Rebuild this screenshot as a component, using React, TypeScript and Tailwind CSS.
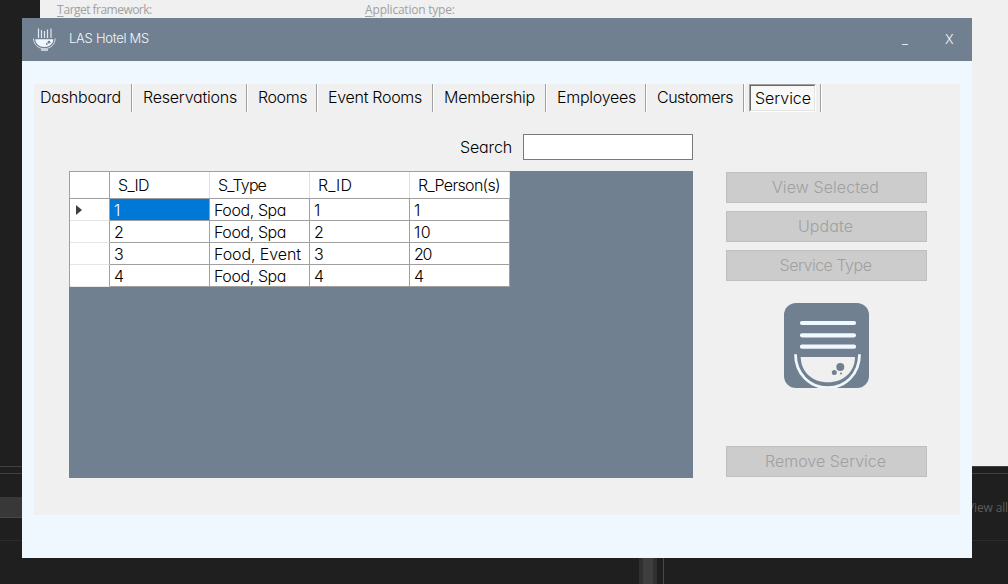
import { useLayoutEffect, useRef } from "react";

/** One line of text whose letter spacing is tuned so that it spans `w` pixels. */
function Label({ text, w, className = "" }: { text: string; w: number; className?: string }) {
  const ref = useRef<HTMLSpanElement>(null);
  useLayoutEffect(() => {
    const el = ref.current;
    if (!el) return;
    el.style.letterSpacing = "0px";
    const natural = el.getBoundingClientRect().width;
    el.style.letterSpacing = `${(w - natural) / text.length}px`;
  }, [text, w]);
  return (
    <span ref={ref} className={`inline-block whitespace-pre ${className}`}>
      {text}
    </span>
  );
}

const tabs = [
  { text: "Dashboard", w: 81, box: "w-[99px] pl-[6px]" },
  { text: "Reservations", w: 94, box: "w-[115px] pl-[10px]" },
  { text: "Rooms", w: 49, box: "w-[70px] pl-[10px]" },
  { text: "Event Rooms", w: 94, box: "w-[116px] pl-[10px]" },
  { text: "Membership", w: 91, box: "w-[113px] pl-[10px]" },
  { text: "Employees", w: 79, box: "w-[100px] pl-[10px]" },
  { text: "Customers", w: 76, box: "w-[98px] pl-[10px]" },
];

const columns = [
  { text: "S_ID", w: 31 },
  { text: "S_Type", w: 48 },
  { text: "R_ID", w: 34 },
  { text: "R_Person(s)", w: 82 },
];

const rows = [
  ["1", "Food, Spa", "1", "1"],
  ["2", "Food, Spa", "2", "10"],
  ["3", "Food, Event", "3", "20"],
  ["4", "Food, Spa", "4", "4"],
];

const cellWidths: Record<string, number> = {
  "Food, Spa": 72,
  "Food, Event": 87,
  "10": 17,
  "20": 17,
};

function TitleIcon() {
  return (
    <svg width="24" height="24" viewBox="0 0 24 24" fill="none">
      <path d="M5.500 1.500V11M8.500 3V11M11.500 4V11M14.500 2.500V11M18 1.500V11" stroke="#dfe8f0" strokeWidth="1.200" />
      <path d="M2.300 12.300H20.300C20 17 16.500 20 11.300 20S2.600 17 2.300 12.300Z" fill="#f0f8ff" />
      <path d="M.5 11.500C.8 17.500 5 21.700 11.300 21.700S21.900 17.500 22.200 11.500" stroke="#d5dfe8" strokeWidth="1" />
      <path d="M8 23H15" stroke="#f0f8ff" strokeWidth="1.300" />
      <circle cx="16" cy="15.200" r="1.400" fill="#708090" />
      <circle cx="13.800" cy="17" r=".9" fill="#708090" />
    </svg>
  );
}

function Logo() {
  return (
    <svg width="85" height="85" viewBox="0 0 85 85" fill="none">
      <rect width="85" height="85" rx="12" fill="#708090" />
      <path d="M18 20H70M18 32.300H70M18 43.700H70" stroke="#f0f8ff" strokeWidth="4.200" strokeLinecap="round" />
      <path d="M16.700 54H71C70.800 69 59.500 79.300 43.800 79.300S17 69 16.700 54Z" fill="#f0f0f0" />
      <path d="M11.500 51.300C11.500 71 26 84.700 43.700 84.700S75.500 71 75.500 51.300" stroke="#f0f8ff" strokeWidth="2.800" />
      <circle cx="56.300" cy="64" r="4" fill="#708090" />
      <circle cx="50.300" cy="69.400" r="2.500" fill="#708090" />
      <circle cx="57" cy="70.500" r="1" fill="#708090" />
    </svg>
  );
}

function ActionButton({ text, w }: { text: string; w: number }) {
  return (
    <button
      disabled
      className="flex h-[31px] w-[201px] justify-center border border-[#bfbfbf] bg-[#cccccc] pt-[4px] pr-[2px] leading-5 text-[#a0a0a0]"
    >
      <Label text={text} w={w} />
    </button>
  );
}

function Backdrop() {
  return (
    <div className="flex h-full flex-col">
      <div className="flex h-[466px]">
        <div className="w-10 bg-[#1f1f1f]" />
        <div className="flex flex-1 bg-[#f0f0f0] pl-[17px] font-['Open_Sans',sans-serif] text-[12px] leading-[20px] font-normal text-[#a0a0a0]">
          <div className="w-[308px]">
            <span className="underline underline-offset-2">T</span>
            <Label text="arget framework:" w={88} />
          </div>
          <div>
            <span className="underline underline-offset-2">A</span>
            <Label text="pplication type:" w={82} />
          </div>
        </div>
      </div>
      <div className="h-[8px] border-y border-[#404040]" />
      <div className="flex h-[67px] justify-between border-b border-[#2c2c2c]">
        <div className="mt-[23px] h-[21px] w-[22px] border-b border-[#484848] bg-[#383838]" />
        <span className="mt-[24px] whitespace-nowrap font-['Open_Sans',sans-serif] text-[12px] leading-5 font-normal text-[#5c5c5c]">
          <Label text="View all" w={41} />
        </span>
      </div>
      <div className="flex flex-1 pl-[639px]">
        <div className="w-[18px] border-x-4 border-[#303030] bg-[#3e3e3e]" />
        <div className="ml-[6px] w-px bg-[#484848]" />
      </div>
    </div>
  );
}

export default function App() {
  return (
    <div className="relative h-[584px] w-[1008px] overflow-hidden bg-[#1f1f1f] font-[Inter,sans-serif] text-[16px] font-light text-black [font-feature-settings:'cv11']">
      <Backdrop />
      <div className="absolute top-[18px] left-[22px] flex h-[540px] w-[950px] flex-col bg-[#f0f8ff]">
        <header className="flex h-[43px] bg-[#708090] text-[13px] leading-[20px] text-[#f0f8ff]">
          <div className="pt-[9px] pl-[11px]">
            <TitleIcon />
          </div>
          <div className="w-[845px] pt-[10px] pl-[12px]">
            <Label text="LAS Hotel MS" w={80} />
          </div>
          <div className="w-[43px] pt-[11px]">_</div>
          <div className="pt-[11px]">X</div>
        </header>
        <main className="mt-[23px] ml-[12px] flex h-[431px] w-[926px] flex-col bg-[#f0f0f0]">
          <nav className="flex h-[28px] leading-5">
            {tabs.map((t) => (
              <div key={t.text} className={`flex shrink-0 border-r border-white pt-[3px] ${t.box}`}>
                <div className="flex-1">
                  <Label text={t.text} w={t.w} />
                </div>
                <div className="-mt-[3px] w-px bg-[#a0a0a0]" />
              </div>
            ))}
            <div className="flex w-[77px] border-r border-white pl-[4px]">
              <div className="h-[28px] w-[67px] border border-t-[#a0a0a0] border-r-white border-b-white border-l-[#a0a0a0]">
                <div className="h-[26px] border border-t-[#696969] border-r-[#e3e3e3] border-b-[#e3e3e3] border-l-[#696969] bg-[#f8f8f8] pt-[2px] pl-[4px]">
                  <Label text="Service" w={56} />
                </div>
              </div>
              <div className="ml-auto w-px bg-[#a0a0a0]" />
            </div>
          </nav>
          <div className="mt-[22px] flex h-[26px] pl-[426px] leading-5">
            <div className="w-[63px] pt-[3px]">
              <Label text="Search" w={52} />
            </div>
            <div className="w-[170px] border border-[#7a7a7a] bg-white" />
          </div>
          <div className="mt-[11px] flex pl-[35px]">
            <div className="h-[307px] w-[624px] bg-[#708090]">
              <div className="w-[441px] border-t border-l border-[#a0a0a0] bg-white leading-5">
                <div className="flex h-[27px] border-b border-[#a0a0a0]">
                  <div className="w-[40px] border-r border-[#a0a0a0]" />
                  {columns.map((c) => (
                    <div key={c.text} className="w-[100px] border-r border-[#e0e0e0] pt-[3px] pl-[8px]">
                      <Label text={c.text} w={c.w} />
                    </div>
                  ))}
                </div>
                {rows.map((r, i) => (
                  <div key={r[0]} className="flex h-[22px]">
                    <div className="flex w-[40px] items-center border-r border-b border-r-[#a0a0a0] border-b-[#e5e5e5] pl-[6px]">
                      {i === 0 && (
                        <svg width="6" height="10" viewBox="0 0 6 10">
                          <path d="M0 0L6 5L0 10Z" fill="#404040" />
                        </svg>
                      )}
                    </div>
                    {r.map((v, j) => (
                      <div
                        key={j}
                        className={`w-[100px] border-r border-b border-[#a0a0a0] pl-[4px] ${
                          i === 0 && j === 0 ? "bg-[#0078d7] text-white" : ""
                        }`}
                      >
                        <div className="pt-[1px]">
                          <Label text={v} w={cellWidths[v] ?? 9} />
                        </div>
                      </div>
                    ))}
                  </div>
                ))}
              </div>
            </div>
            <div className="ml-[33px] flex h-[306px] flex-col pt-[1px]">
              <div className="flex flex-col gap-2">
                <ActionButton text="View Selected" w={107} />
                <ActionButton text="Update" w={55} />
                <ActionButton text="Service Type" w={92} />
              </div>
              <div className="mt-[22px] pl-[58px]">
                <Logo />
              </div>
              <div className="mt-auto">
                <ActionButton text="Remove Service" w={121} />
              </div>
            </div>
          </div>
        </main>
      </div>
    </div>
  );
}
